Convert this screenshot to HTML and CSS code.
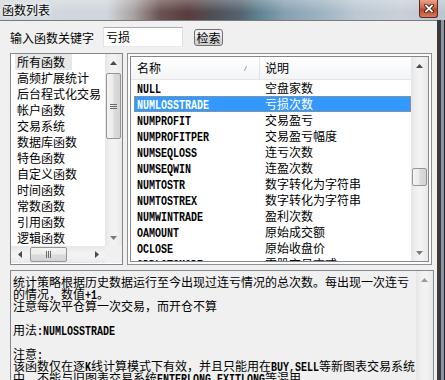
FILE: index.html
```html
<!DOCTYPE html>
<html lang="zh-CN">
<head>
<meta charset="utf-8">
<title>函数列表</title>
<link rel="stylesheet" href="styles.css">
</head>
<body>
<div class="win">
  <div class="titlebar">
    <span class="title">函数列表</span>
    <div class="close">
      <svg width="10" height="9" viewBox="0 0 10 9"><path d="M2 1.5L8 7.5M8 1.5L2 7.5" stroke="#3b1a12" stroke-width="3.6" stroke-linecap="square"/><path d="M2 1.5L8 7.5M8 1.5L2 7.5" stroke="#fff" stroke-width="1.8" stroke-linecap="square"/></svg>
    </div>
  </div>
  <div class="frame">
    <div class="client">
      <div class="search">
        <span class="label">输入函数关键字</span>
        <div class="kw">亏损</div>
        <div class="btn">检索</div>
      </div>
      <div class="panels">
        <div class="lpanel">
          <div class="lbody">
            <ul class="llist">
              <li class="sel">所有函数</li>
              <li>高频扩展统计</li>
              <li>后台程式化交易</li>
              <li>帐户函数</li>
              <li>交易系统</li>
              <li>数据库函数</li>
              <li>特色函数</li>
              <li>自定义函数</li>
              <li>时间函数</li>
              <li>常数函数</li>
              <li>引用函数</li>
              <li>逻辑函数</li>
            </ul>
            <div class="vs">
              <div class="ab"><svg width="7" height="4"><path d="M3.5 0L7 4H0z" fill="#4a4a4a"/></svg></div>
              <div class="th lthumb"><svg width="7" height="5"><path d="M0 0.5H7M0 2.5H7M0 4.5H7" stroke="#6a6a6a" stroke-width="1"/></svg></div>
              <div class="sp"></div>
              <div class="ab"><svg width="7" height="4"><path d="M0 0H7L3.5 4z" fill="#7a7a7a"/></svg></div>
            </div>
          </div>
          <div class="hrow">
            <div class="hs">
              <div class="ab"><svg width="4" height="7"><path d="M4 0V7L0 3.5z" fill="#4a4a4a"/></svg></div>
              <div class="hth"><svg width="5" height="7"><path d="M0.5 0V7M2.5 0V7M4.5 0V7" stroke="#6a6a6a" stroke-width="1"/></svg></div>
              <div class="sp"></div>
              <div class="ab"><svg width="4" height="7"><path d="M0 0V7L4 3.5z" fill="#4a4a4a"/></svg></div>
            </div>
            <div class="corner"></div>
          </div>
        </div>
        <div class="rpanel">
          <div class="rlist">
            <div class="rmain">
              <div class="rhead">
                <div class="hc1">名称<span class="sorti"></span></div>
                <div class="hc2">说明</div>
              </div>
              <div class="rows">
                <div class="row"><span class="c1"><span class="m">NULL</span></span><span>空盘家数</span></div>
                <div class="row sel"><span class="c1"><span class="m">NUMLOSSTRADE</span></span><span>亏损次数</span></div>
                <div class="row"><span class="c1"><span class="m">NUMPROFIT</span></span><span>交易盈亏</span></div>
                <div class="row"><span class="c1"><span class="m">NUMPROFITPER</span></span><span>交易盈亏幅度</span></div>
                <div class="row"><span class="c1"><span class="m">NUMSEQLOSS</span></span><span>连亏次数</span></div>
                <div class="row"><span class="c1"><span class="m">NUMSEQWIN</span></span><span>连盈次数</span></div>
                <div class="row"><span class="c1"><span class="m">NUMTOSTR</span></span><span>数字转化为字符串</span></div>
                <div class="row"><span class="c1"><span class="m">NUMTOSTREX</span></span><span>数字转化为字符串</span></div>
                <div class="row"><span class="c1"><span class="m">NUMWINTRADE</span></span><span>盈利次数</span></div>
                <div class="row"><span class="c1"><span class="m">OAMOUNT</span></span><span>原始成交额</span></div>
                <div class="row"><span class="c1"><span class="m">OCLOSE</span></span><span>原始收盘价</span></div>
                <div class="row"><span class="c1"><span class="m">ODDLOTSMODE</span></span><span>零股交易方式</span></div>
              </div>
            </div>
            <div class="vs">
              <div class="ab"><svg width="7" height="4"><path d="M3.5 0L7 4H0z" fill="#4a4a4a"/></svg></div>
              <div class="th rthumb"></div>
              <div class="sp"></div>
              <div class="ab"><svg width="7" height="4"><path d="M0 0H7L3.5 4z" fill="#7a7a7a"/></svg></div>
            </div>
          </div>
        </div>
      </div>
      <div class="desc">
        <div class="dtext">
          <div class="ln">统计策略根据历史数据运行至今出现过连亏情况的总次数。每出现一次连亏</div>
          <div class="ln">的情况，数值<span class="m w2">+1</span>。</div>
          <div class="ln">注意每次平仓算一次交易，而开仓不算</div>
          <div class="ln"></div>
          <div class="ln">用法<span class="m w13">:NUMLOSSTRADE</span></div>
          <div class="ln"></div>
          <div class="ln">注意<span class="m w1">:</span></div>
          <div class="ln">该函数仅在逐<span class="m w1">K</span>线计算模式下有效，并且只能用在<span class="m w8">BUY,SELL</span>等新图表交易系统</div>
          <div class="ln">中，不能与旧图表交易系统<span class="m w18">ENTERLONG,EXITLONG</span>等混用。</div>
        </div>
        <div class="vs">
          <div class="ab"><svg width="7" height="4"><path d="M3.5 0L7 4H0z" fill="#9a9a9a"/></svg></div>
          <div class="sp"></div>
        </div>
      </div>
    </div>
    <div class="rframe"></div>
  </div>
</div>
</body>
</html>
```

FILE: styles.css
```css
* { box-sizing: border-box; margin: 0; padding: 0; }
body {
  width: 445px; height: 380px; overflow: hidden;
  font-family: "Noto Sans CJK SC", sans-serif;
  font-size: 12px; color: #000; background: #f0f0f0;
}
.win { width: 445px; height: 380px; display: flex; flex-direction: column; }
.titlebar {
  height: 20px; flex: none; display: flex; justify-content: space-between;
  background:
    linear-gradient(rgba(255,255,255,0.25), rgba(255,255,255,0) 60%),
    linear-gradient(90deg, #d3d8dd 0, #d0d6dc 24%, #a8a2a2 30%, #6b5252 36%, #5a3c3c 42%, #4e5056 48%, #55636f 54%, #5f8190 58%, #86a0b1 64%, #9db3c2 72%, #bcc8d2 80%, #c9d1d8 90%, #b9c6d1 100%);
}
.title {
  padding-left: 2px; font-size: 12px; line-height: 20px;
  text-shadow: 0 0 4px #fff, 0 0 6px #fff;
}
.close {
  width: 19px; height: 18px; margin-right: 7px;
  border: 1px solid #5e2a20; border-top: none;
  border-radius: 0 0 3px 3px;
  background: linear-gradient(#e9a08a, #d2664a 45%, #c04428 55%, #d77a5c);
  display: flex; align-items: center; justify-content: center;
}
.frame { flex: 1; display: flex; min-height: 0; }
.client {
  width: 437px; flex: none; background: #f0f0f0; overflow: hidden;
  border-top: 1px solid #7c7c7c;
  display: flex; flex-direction: column;
}
.rframe {
  flex: 1;
  background: linear-gradient(90deg, #3a3a3a 0, #3a3a3a 4px, #8a96a2 4px, #8a96a2 7px, #222 7px);
}
.search { height: 32px; flex: none; display: flex; align-items: center; padding-left: 10px; }
.label { width: 93px; }
.kw {
  width: 80px; height: 20px; background: #fff; padding-left: 2px;
  border: 1px solid; border-color: #abadb3 #dbdfe6 #e3e9ef #e2e3ea;
  line-height: 18px;
}
.btn {
  margin-left: 11px; width: 29px; height: 17px;
  border: 1px solid #707070; border-radius: 3px;
  background: linear-gradient(#f2f2f2, #ebebeb 50%, #dddddd 50%, #cfcfcf);
  line-height: 15px; text-align: center;
}
.panels { display: flex; gap: 4px; margin-left: 10px; height: 212px; flex: none; }
.lpanel {
  width: 113px; border: 1px solid #828790; background: #fff;
  display: flex; flex-direction: column;
}
.lbody { display: flex; height: 192px; flex: none; }
.llist { width: 94px; padding-left: 4px; list-style: none; overflow: hidden; }
.llist li { height: 16px; line-height: 16px; padding-left: 2px; white-space: nowrap; }
.llist li.sel { background: #e8e8e8; width: 57px; }
.hrow { display: flex; height: 17px; flex: none; }
.corner { width: 17px; background: #f0f0f0; }
.vs {
  width: 17px; flex: none; display: flex; flex-direction: column;
  background: linear-gradient(90deg, #e6e6e6, #f1f1f1 35%, #f3f3f3 60%, #e8e8e8);
}
.hs {
  width: 94px; display: flex;
  background: linear-gradient(#e6e6e6, #f1f1f1 35%, #f3f3f3 60%, #e8e8e8);
}
.ab { width: 17px; height: 17px; flex: none; display: flex; align-items: center; justify-content: center; }
.sp { flex: 1; }
.th {
  margin: 0 1px; border: 1px solid #959595; border-radius: 2px;
  background: linear-gradient(90deg, #f4f4f4, #ebebeb 45%, #dbdbdb 55%, #d3d3d3);
  display: flex; align-items: center; justify-content: center;
}
.lthumb { margin-top: 2px; height: 66px; }
.rthumb { margin-top: 94px; height: 18px; }
.hth {
  margin: 1px 0 1px 2px; width: 37px; border: 1px solid #959595; border-radius: 2px;
  background: linear-gradient(#f4f4f4, #ebebeb 45%, #dbdbdb 55%, #d3d3d3);
  display: flex; align-items: center; justify-content: center;
}
.rpanel { width: 305px; border: 1px solid #8e8f8f; padding: 2px; background: #fbfbfb; }
.rlist { height: 100%; border: 1px solid #828790; display: flex; background: #fff; }
.rmain { width: 280px; overflow: hidden; }
.rhead {
  height: 23px; display: flex; border-bottom: 1px solid #e5e5e5;
  background: linear-gradient(#ffffff, #f3f4f6);
}
.hc1 { width: 129px; padding-left: 6px; border-right: 1px solid #e0e2e5; line-height: 22px; position: relative; }
.sorti {
  position: absolute; left: 114px; top: 9px; width: 1px; height: 5px;
  background: #a8a8a8; transform: rotate(25deg);
}
.hc2 { flex: 1; padding-left: 5px; line-height: 22px; }
.row { height: 16px; line-height: 16px; display: flex; margin-left: 3px; width: 277px; white-space: nowrap; }
.row .c1 { width: 131px; padding-left: 3px; flex: none; }
.row.sel { background: #3399ff; color: #fff; outline: 1px dotted #c98a4a; outline-offset: -1px; }
.m {
  display: inline-block;
  font-family: "Liberation Mono", monospace; font-weight: bold;
  font-size: 12px; line-height: inherit;
  transform: scaleX(0.8333); transform-origin: 0 50%;
}
.w1 { margin-right: -1.2px; }
.w2 { margin-right: -2.4px; }
.w8 { margin-right: -9.6px; }
.w13 { margin-right: -15.6px; }
.w18 { margin-right: -21.6px; }
.desc {
  margin: 5px 0 0 10px; width: 424px; height: 120px; flex: none;
  border: 1px solid #828790; display: flex; background: #f0f0f0;
}
.dtext { flex: 1; padding: 5px 0 0 2px; white-space: nowrap; overflow: hidden; }
.ln { height: 12px; line-height: 12px; }
```
